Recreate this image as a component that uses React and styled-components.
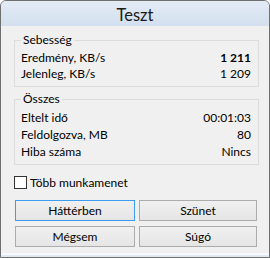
import React from "react";
import styled, { createGlobalStyle } from "styled-components";

const Global = createGlobalStyle`
  html, body { margin: 0; padding: 0; background: #ffffff; }
  body { font-family: "Lato", "Noto Sans", sans-serif; }
  * { box-sizing: border-box; }
`;

const Window = styled.div`
  width: 270px;
  height: 258px;
  border: 1px solid #6f6f6f;
  border-radius: 6px 6px 0 0;
  background: #dfe8f3;
  display: flex;
  flex-direction: column;
  overflow: hidden;
`;

const TitleBar = styled.div`
  height: 25px;
  flex: none;
  display: flex;
  align-items: center;
  justify-content: center;
  background: linear-gradient(#e3ebf5, #d3e0ef);
  color: #1a1a1a;
  font-size: 16.5px;
  padding-top: 2px;
`;

const Body = styled.div`
  flex: 1;
  background: #f0f0f0;
  padding: 6px 10px 0 13px;
  margin-bottom: 2px;
  border-bottom: 2px solid #f7f9fc;
  display: flex;
  flex-direction: column;
  font-size: 12px;
  color: #000;
`;

const Group = styled.fieldset`
  margin: ${(p) => (p.$first ? "0" : "4px 0 0")};
  width: 245px;
  border: 1px solid #dcdcdc;
  border-radius: 0;
  padding: ${(p) => p.$pad};
`;

const Legend = styled.legend`
  margin-left: 6px;
  padding: 0 2px;
  line-height: 16px;
  font-size: 12px;
`;

const Row = styled.div`
  display: flex;
  justify-content: space-between;
  align-items: center;
  height: ${(p) => p.$h}px;
  padding: 0 7px 0 6px;
`;

const Value = styled.span`
  font-weight: ${(p) => (p.$bold ? 700 : 400)};
`;

const CheckRow = styled.label`
  display: flex;
  align-items: center;
  gap: 3px;
  margin-top: 11px;
  height: 13px;
`;

const Box = styled.span`
  width: 13px;
  height: 13px;
  border: 1px solid #333;
  background: #fff;
  flex: none;
`;

const Buttons = styled.div`
  display: grid;
  grid-template-columns: 120px 118px;
  grid-auto-rows: 21px;
  column-gap: 4px;
  row-gap: 5px;
  margin: 11px 0 0 1px;
`;

const Button = styled.button`
  font: inherit;
  color: #000;
  border: 1px solid ${(p) => (p.$default ? "#3c9cf0" : "#acacac")};
  background: linear-gradient(#f0f0f0, #e5e5e5);
  padding: 0;
  border-radius: 0;
`;

export default function App() {
  return (
    <>
      <Global />
      <Window>
        <TitleBar>Teszt</TitleBar>
        <Body>
          <Group $first $pad="1px 0 5px">
            <Legend>Sebesség</Legend>
            <Row $h={16}>
              <span>Eredmény, KB/s</span>
              <Value $bold>1 211</Value>
            </Row>
            <Row $h={16}>
              <span>Jelenleg, KB/s</span>
              <Value>1 209</Value>
            </Row>
          </Group>
          <Group $pad="2px 0 4px">
            <Legend>Összes</Legend>
            <Row $h={17}>
              <span>Eltelt idő</span>
              <Value>00:01:03</Value>
            </Row>
            <Row $h={17}>
              <span>Feldolgozva, MB</span>
              <Value>80</Value>
            </Row>
            <Row $h={17}>
              <span>Hiba száma</span>
              <Value>Nincs</Value>
            </Row>
          </Group>
          <CheckRow>
            <Box />
            <span>Több munkamenet</span>
          </CheckRow>
          <Buttons>
            <Button $default>Háttérben</Button>
            <Button>Szünet</Button>
            <Button>Mégsem</Button>
            <Button>Súgó</Button>
          </Buttons>
        </Body>
      </Window>
    </>
  );
}
